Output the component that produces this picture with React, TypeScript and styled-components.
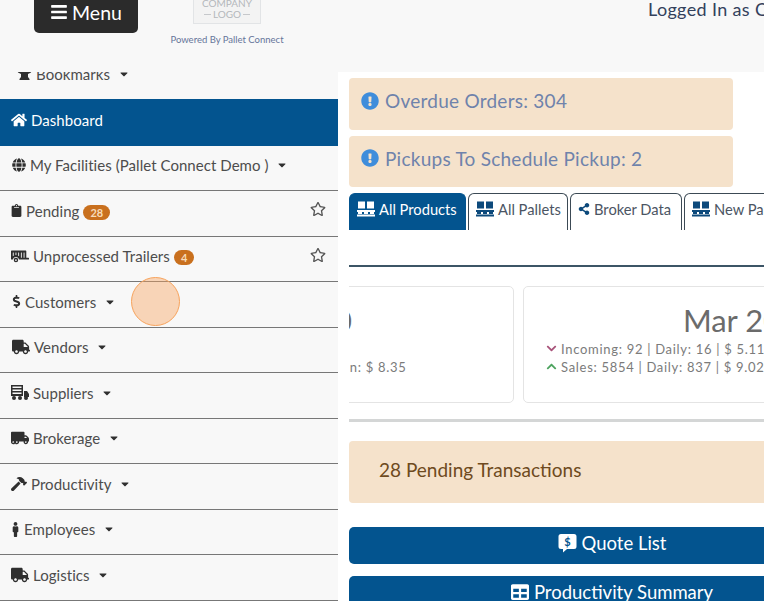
import styled, { createGlobalStyle } from 'styled-components'
import type { ReactNode } from 'react'
import {
	FaBars,
	FaCaretDown,
	FaChevronDown,
	FaChevronUp,
	FaClipboard,
	FaDollarSign,
	FaExclamationCircle,
	FaGlobe,
	FaHammer,
	FaHome,
	FaMale,
	FaRegStar,
	FaShareAlt,
	FaTable,
	FaTrailer,
	FaTruck,
	FaTruckMoving,
} from 'react-icons/fa'

const GlobalStyle = createGlobalStyle`
	html, body {
		margin: 0;
		width: 764px;
		height: 601px;
		overflow: hidden;
		background: #fff;
		font-family: Lato, 'Open Sans', sans-serif;
		color: #4a4a4a;
	}
	* {
		box-sizing: border-box;
	}
`

const Page = styled.div`
	width: 764px;
	height: 601px;
	position: relative;
	overflow: hidden;
`

const Header = styled.header`
	height: 72px;
	display: flex;
	align-items: flex-start;
	background: #f8f8f8;
	padding-left: 34px;
	overflow: hidden;
`

const MenuButton = styled.div`
	width: 104px;
	height: 46px;
	flex: none;
	margin-top: -13px;
	padding-top: 4px;
	display: flex;
	align-items: center;
	justify-content: center;
	gap: 4px;
	background: #2b2b2b;
	border-radius: 5px;
	color: #fff;
	font-size: 19.5px;
`

const LogoBlock = styled.div`
	width: 112px;
	flex: none;
	margin-left: 33px;
	display: flex;
	flex-direction: column;
	align-items: center;
`

const LogoBox = styled.div`
	width: 68px;
	height: 37px;
	margin-top: -13px;
	padding-top: 10px;
	border: 1px solid #e2e4e6;
	background: #f3f3f3;
	color: #b4b7bb;
	font-size: 10px;
	line-height: 11px;
	text-align: center;
`

const LogoWord = styled.div`
	display: flex;
	align-items: center;
	justify-content: center;
	gap: 2px;

	&::before,
	&::after {
		content: '';
		width: 7px;
		height: 1px;
		background: #c6c8cb;
	}
`

const PoweredBy = styled.div`
	margin-top: 10px;
	font-size: 9.5px;
	line-height: 12px;
	color: #66759a;
	white-space: nowrap;
`

const LoggedIn = styled.div`
	flex: none;
	margin-left: 365px;
	margin-top: -2px;
	font-size: 18px;
	letter-spacing: 0.35px;
	line-height: 22px;
	color: #33415c;
	white-space: nowrap;
`

const Body = styled.div`
	display: flex;
	height: 529px;
	overflow: hidden;
`

const Sidebar = styled.nav`
	width: 338px;
	flex: none;
	background: #f8f8f8;
	overflow: hidden;
`

const NavList = styled.div`
	margin-top: -19px;
`

const NavRow = styled.div<{ $active?: boolean; $top?: boolean }>`
	height: ${(p) => (p.$active ? '47px' : '45.5px')};
	display: flex;
	align-items: center;
	gap: 4px;
	padding: ${(p) => (p.$top ? '0 17px 3px' : '0 11px 5px')};
	border-bottom: ${(p) => (p.$active || p.$top ? 'none' : '1.5px solid #777')};
	background: ${(p) => (p.$active ? '#03548f' : 'transparent')};
	color: ${(p) => (p.$active ? '#fff' : '#4d4d4d')};
	font-size: 15px;
	letter-spacing: 0.05px;
	white-space: nowrap;

	svg {
		flex: none;
		color: ${(p) => (p.$active ? '#fff' : '#2f2f2f')};
	}
`

const IconSlot = styled.span<{ $width: number }>`
	width: ${(p) => p.$width}px;
	flex: none;
	display: flex;
	align-items: center;
	justify-content: center;
`

const Caret = styled(FaCaretDown)`
	margin-left: 3.5px;
	font-size: 12px;
`

const StarIcon = styled(FaRegStar)`
	margin-left: auto;
	margin-right: 1px;
	margin-bottom: 3px;
	font-size: 16px;

	&& {
		color: #555;
	}
`

const Badge = styled.span`
	padding: 1px 7px;
	border-radius: 10px;
	background: #c9701e;
	color: #f7dcb9;
	font-size: 11px;
	font-weight: 700;
	line-height: 13px;
	margin-top: 3px;
`

const Main = styled.main`
	width: 526px;
	flex: none;
	margin-left: 11px;
	padding-top: 6px;
	display: flex;
	flex-direction: column;

	> * {
		flex: none;
	}
`

const Alert = styled.div`
	width: 384px;
	height: 51.5px;
	margin-bottom: 6px;
	padding: 0 12px 6px;
	display: flex;
	align-items: center;
	gap: 6px;
	background: #f5e2cb;
	border-radius: 4px;
	color: #6f83ab;
	font-size: 19px;
	letter-spacing: 0.25px;

	svg {
		color: #3f8ddb;
		font-size: 18px;
	}
`

const Tabs = styled.div`
	display: flex;
	gap: 2px;
`

const Tab = styled.div<{ $active?: boolean; $width: number }>`
	width: ${(p) => p.$width}px;
	height: 37px;
	flex: none;
	display: flex;
	align-items: center;
	gap: 4px;
	padding: 0 0 6px 7px;
	border: 1.5px solid ${(p) => (p.$active ? '#03548f' : '#3c4a55')};
	border-bottom: none;
	border-radius: 6px 6px 0 0;
	background: ${(p) => (p.$active ? '#03548f' : '#fff')};
	color: ${(p) => (p.$active ? '#fff' : '#4b5563')};
	font-size: 14.7px;
	white-space: nowrap;

	svg {
		color: ${(p) => (p.$active ? '#fff' : '#0d4a7c')};
	}
`

const TabRule = styled.div`
	height: 1.5px;
	margin-top: 35px;
	background: #3c5566;
`

const CardClip = styled.div`
	margin-top: 19px;
	overflow: hidden;
`

const CardTrack = styled.div`
	display: flex;
	gap: 9px;
	margin-left: -289px;
`

const Card = styled.div`
	width: 454px;
	height: 117px;
	flex: none;
	padding: 15px 22px 0;
	border: 1.5px solid #e4e4e4;
	border-radius: 5px;
	background: #fff;
`

const CardTitle = styled.div`
	font-size: 31px;
	line-height: 36px;
	color: #6b6b6b;
	text-align: center;
	margin-bottom: 2px;
`

const StatLine = styled.div`
	display: flex;
	align-items: center;
	gap: 4px;
	height: 18px;
	font-size: 13px;
	color: #7b7b7b;
	letter-spacing: 0.7px;
	white-space: nowrap;
`

const TrendDown = styled(FaChevronDown)`
	color: #a8537a;
	font-size: 11px;
`

const TrendUp = styled(FaChevronUp)`
	color: #4da35f;
	font-size: 11px;
`

const Divider = styled.div`
	height: 2.5px;
	margin-top: 16.5px;
	background: #d4d6d6;
`

const PendingBar = styled.div`
	height: 62px;
	margin-top: 19.5px;
	padding: 0 0 5px 30px;
	display: flex;
	align-items: center;
	background: #f5e2cb;
	border-radius: 4px;
	color: #6e4a20;
	font-size: 19px;
`

const ActionStack = styled.div`
	margin-top: 24px;
	display: flex;
	flex-direction: column;
	gap: 12px;
`

const ActionButton = styled.div`
	height: 37px;
	flex: none;
	padding-bottom: 5px;
	display: flex;
	align-items: center;
	justify-content: center;
	gap: 5px;
	background: #03548f;
	border-radius: 5px;
	color: #fff;
	font-size: 18.5px;
`

const Spotlight = styled.div`
	position: absolute;
	left: 131px;
	top: 277px;
	width: 49px;
	height: 49px;
	border-radius: 50%;
	border: 1.5px solid #f7a35c;
	background: rgba(247, 163, 92, 0.42);
`

function AnvilIcon() {
	return (
		<svg width="15" height="12" viewBox="0 0 15 12" fill="currentColor">
			<path d="M0 1h15l-1 3.5-3 1.5v3l1.5 2v1h-10v-1L4 9V6L1 4.5z" />
		</svg>
	)
}

function SupplierIcon() {
	return (
		<svg width="18" height="15" viewBox="0 0 18 15" fill="currentColor">
			<path d="M0 0h12v11H0zM1.5 1.5v1.5h9V1.5zm0 3v1.5h9V4.5zm0 3V9h9V7.5z" fillRule="evenodd" />
			<path d="M13 6h3l2 3v3h-5z" />
			<circle cx="3" cy="13" r="2" />
			<circle cx="9" cy="13" r="2" />
			<circle cx="15" cy="13" r="2" />
		</svg>
	)
}

function PalletIcon() {
	return (
		<svg width="18" height="16" viewBox="0 0 18 16" fill="currentColor">
			<rect x="1" y="0.5" width="7" height="7" />
			<rect x="10" y="0.5" width="7" height="7" />
			<rect x="0" y="9" width="18" height="2" />
			<rect x="1" y="11" width="4" height="2" />
			<rect x="7" y="11" width="4" height="2" />
			<rect x="13" y="11" width="4" height="2" />
			<rect x="0" y="13.5" width="18" height="2" />
		</svg>
	)
}

function QuoteIcon() {
	return (
		<svg width="19" height="20" viewBox="0 0 19 20" fill="#fff">
			<path d="M3 1h13a2.500 2.500 0 0 1 2.500 2.500v10A2.500 2.500 0 0 1 16 16H9l-4 3.500V16H3a2.500 2.500 0 0 1-2.500-2.500v-10A2.500 2.500 0 0 1 3 1z" />
			<text x="9.500" y="12.500" fontSize="11" fontWeight="700" textAnchor="middle" fill="#03548f" fontFamily="Lato, sans-serif">
				$
			</text>
		</svg>
	)
}

type NavItem = {
	label: string
	icon: ReactNode
	slot: number
	badge?: string
	caret?: boolean
	star?: boolean
}

const navItems: NavItem[] = [
	{ label: 'My Facilities (Pallet Connect Demo )', icon: <FaGlobe size={14} />, slot: 15, caret: true },
	{ label: 'Pending', icon: <FaClipboard size={13} />, slot: 11, badge: '28', star: true },
	{ label: 'Unprocessed Trailers', icon: <FaTrailer size={18} />, slot: 18, badge: '4', star: true },
	{ label: 'Customers', icon: <FaDollarSign size={13} />, slot: 10, caret: true },
	{ label: 'Vendors', icon: <FaTruck size={18} />, slot: 19, caret: true },
	{ label: 'Suppliers', icon: <SupplierIcon />, slot: 18, caret: true },
	{ label: 'Brokerage', icon: <FaTruckMoving size={18} />, slot: 18, caret: true },
	{ label: 'Productivity', icon: <FaHammer size={16} />, slot: 16, caret: true },
	{ label: 'Employees', icon: <FaMale size={15} />, slot: 9, caret: true },
	{ label: 'Logistics', icon: <FaTruck size={18} />, slot: 18, caret: true },
]

export default function App() {
	return (
		<Page>
			<GlobalStyle />
			<Header>
				<MenuButton>
					<FaBars size={18} />
					Menu
				</MenuButton>
				<LogoBlock>
					<LogoBox>
						COMPANY
						<LogoWord>LOGO</LogoWord>
					</LogoBox>
					<PoweredBy>Powered By Pallet Connect</PoweredBy>
				</LogoBlock>
				<LoggedIn>Logged In as Connect</LoggedIn>
			</Header>
			<Body>
				<Sidebar>
					<NavList>
						<NavRow $top>
							<AnvilIcon />
							Bookmarks
							<Caret />
						</NavRow>
						<NavRow $active>
							<FaHome size={16} />
							Dashboard
						</NavRow>
						{navItems.map((item) => (
							<NavRow key={item.label}>
								<IconSlot $width={item.slot}>{item.icon}</IconSlot>
								{item.label}
								{item.badge && <Badge>{item.badge}</Badge>}
								{item.caret && <Caret />}
								{item.star && <StarIcon />}
							</NavRow>
						))}
					</NavList>
				</Sidebar>
				<Main>
					<Alert>
						<FaExclamationCircle />
						Overdue Orders: 304
					</Alert>
					<Alert>
						<FaExclamationCircle />
						Pickups To Schedule Pickup: 2
					</Alert>
					<Tabs>
						<Tab $active $width={117}>
							<PalletIcon />
							All Products
						</Tab>
						<Tab $width={100}>
							<PalletIcon />
							All Pallets
						</Tab>
						<Tab $width={112}>
							<FaShareAlt size={12} />
							Broker Data
						</Tab>
						<Tab $width={120}>
							<PalletIcon />
							New Pallets
						</Tab>
					</Tabs>
					<TabRule />
					<CardClip>
						<CardTrack>
							<Card>
								<CardTitle>Feb 2020</CardTitle>
								<StatLine>
									<TrendDown />
									Incoming: 120 | Daily: 18 | $ 5.11
								</StatLine>
								<StatLine>
									<TrendUp />
									Sales: 6120 | Daily: 874 | $ 9.02 | Margin: $ 8.35
								</StatLine>
							</Card>
							<Card>
								<CardTitle>Mar 2020</CardTitle>
								<StatLine>
									<TrendDown />
									Incoming: 92 | Daily: 16 | $ 5.11
								</StatLine>
								<StatLine>
									<TrendUp />
									Sales: 5854 | Daily: 837 | $ 9.02
								</StatLine>
							</Card>
						</CardTrack>
					</CardClip>
					<Divider />
					<PendingBar>28 Pending Transactions</PendingBar>
					<ActionStack>
						<ActionButton>
							<QuoteIcon />
							Quote List
						</ActionButton>
						<ActionButton>
							<FaTable size={18} />
							Productivity Summary
						</ActionButton>
					</ActionStack>
				</Main>
			</Body>
			<Spotlight />
		</Page>
	)
}
